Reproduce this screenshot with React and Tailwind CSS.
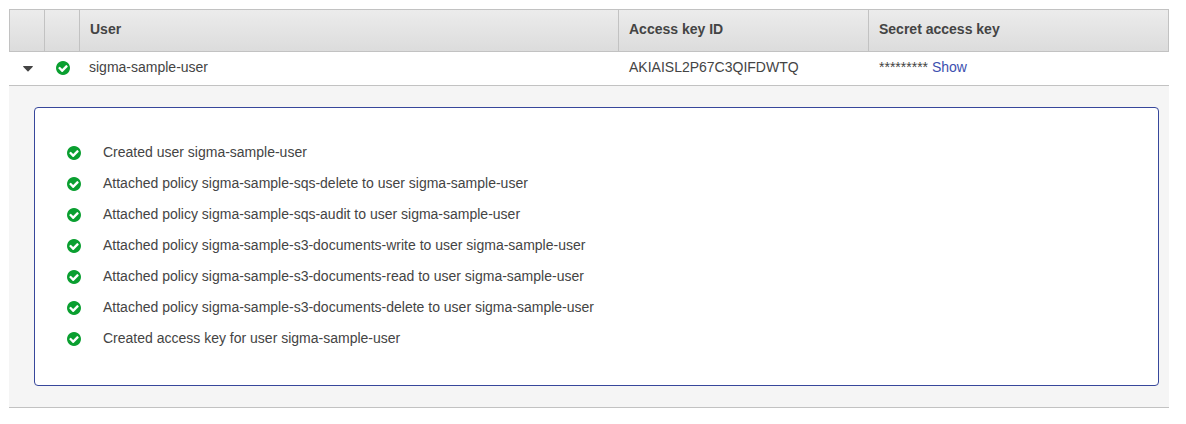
const events = [
  'Created user sigma-sample-user',
  'Attached policy sigma-sample-sqs-delete to user sigma-sample-user',
  'Attached policy sigma-sample-sqs-audit to user sigma-sample-user',
  'Attached policy sigma-sample-s3-documents-write to user sigma-sample-user',
  'Attached policy sigma-sample-s3-documents-read to user sigma-sample-user',
  'Attached policy sigma-sample-s3-documents-delete to user sigma-sample-user',
  'Created access key for user sigma-sample-user',
];

function CheckCircle() {
  return (
    <svg viewBox="128 128 1536 1536" className="size-3.5 shrink-0 fill-[#0a9f30]" aria-hidden="true">
      <path d="M1412 734q0-28-18-46l-91-90q-19-19-45-19t-45 19l-408 407-226-226q-19-19-45-19t-45 19l-91 90q-18 18-18 46 0 27 18 45l362 362q19 19 45 19 27 0 46-19l543-543q18-18 18-45zm252 162q0 209-103 385.5t-279.5 279.5-385.5 103-385.5-103-279.5-279.5-103-385.5 103-385.5 279.5-279.5 385.5-103 385.5 103 279.5 279.5 103 385.5z" />
    </svg>
  );
}

function Caret() {
  return (
    <svg viewBox="0 0 10 6" className="h-1.5 w-2.5 fill-[#444]" aria-hidden="true">
      <path d="M0.6 0H9.4Q10 0 9.8 0.7L5.5 5.3Q5 5.8 4.5 5.3L0.2 0.7Q0 0 0.6 0Z" />
    </svg>
  );
}

export default function App() {
  return (
    <main className="min-h-screen bg-white p-[9px] font-['Liberation_Sans',Arial,sans-serif] text-sm leading-5 text-[#444]">
      <div className="w-[1160px]">
        <div className="grid h-[43px] grid-cols-[34px_35px_539px_250px_300px] border border-[#c2c2c2] bg-linear-to-b from-[#ececec] to-[#dcdcdc] font-bold">
          <div />
          <div className="border-l border-[#c2c2c2]" />
          <div className="border-l border-[#c2c2c2] pt-[9px] pl-2.5">User</div>
          <div className="border-l border-[#c2c2c2] pt-[9px] pl-2.5">Access key ID</div>
          <div className="border-l border-[#c2c2c2] pt-[9px] pl-2.5">Secret access key</div>
        </div>

        <div className="grid h-[34px] grid-cols-[35px_35px_540px_250px_300px] border-b border-[#c2c2c2]">
          <button type="button" aria-label="Toggle details" className="flex items-start pt-3.5 pl-3.5">
            <Caret />
          </button>
          <div className="pt-[9px] pl-3">
            <CheckCircle />
          </div>
          <div className="pt-[5px] pl-2.5">sigma-sample-user</div>
          <div className="pt-[5px] pl-2.5">AKIAISL2P67C3QIFDWTQ</div>
          <div className="pt-[5px] pl-2.5">
            ********* <a href="#show" className="text-[#3c50af]">Show</a>
          </div>
        </div>

        <div className="h-[322px] border-b border-[#c2c2c2] bg-[#f5f5f5] pt-[21px] pr-2.5 pl-[25px]">
          <ul className="h-[279px] rounded border border-[#37479b] bg-white pt-7 pl-8">
            {events.map((text) => (
              <li key={text} className="flex h-[31px] items-center">
                <span className="mt-0.5 mr-[22px]">
                  <CheckCircle />
                </span>
                {text}
              </li>
            ))}
          </ul>
        </div>
      </div>
    </main>
  );
}
